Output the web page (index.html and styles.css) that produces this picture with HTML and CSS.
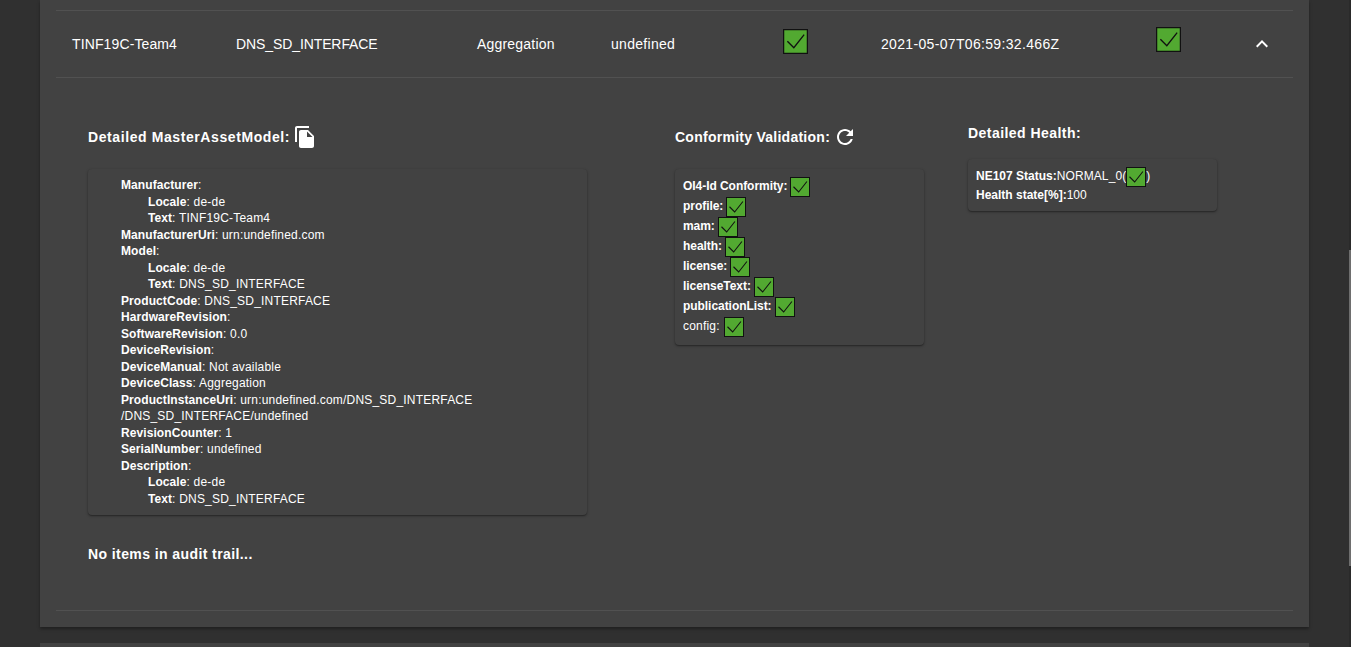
FILE: index.html
```html
<!DOCTYPE html>
<html lang="en">
<head>
	<meta charset="UTF-8">
	<title>Assets</title>
	<link rel="stylesheet" href="styles.css">
</head>
<body>
	<svg class="defs" width="0" height="0">
		<symbol id="check" viewBox="0 0 24 24">
			<rect x="0.6" y="0.6" width="22.800" height="22.800" fill="#52a931" stroke="#111" stroke-width="1.200"/>
			<path d="M4.200 11.700l6.200 6.300L20.300 5.400" fill="none" stroke="#111" stroke-width="1.300"/>
		</symbol>
	</svg>
	<div class="scroll-page">
		<div class="panel">
			<div class="row">
				<div class="cell c1">TINF19C-Team4</div>
				<div class="cell c2">DNS_SD_INTERFACE</div>
				<div class="cell c3">Aggregation</div>
				<div class="cell c4">undefined</div>
				<div class="cell c5"><svg class="check-lg"><use href="#check"/></svg></div>
				<div class="cell c6">2021-05-07T06:59:32.466Z</div>
				<div class="cell c7"><svg class="check-lg"><use href="#check"/></svg></div>
				<div class="cell c8">
					<svg class="chevron" viewBox="0 0 24 24"><path d="M12 8l-6 6 1.410 1.410L12 10.830l4.590 4.580L18 14z" fill="#fff"/></svg>
				</div>
			</div>
			<div class="details">
				<div class="columns">
					<div class="col-mam">
						<h3 class="head head-mam">Detailed MasterAssetModel:
							<svg class="copy" viewBox="0 0 24 24"><path d="M16 1H4c-1.100 0-2 .9-2 2v14h2V3h12V1zm-1 4l6 6v10c0 1.100-.9 2-2 2H7.990C6.890 23 6 22.100 6 21l.01-14c0-1.100.89-2 1.990-2h7zm-1 7h5.500L14 6.500V12z" fill="#fff"/></svg>
						</h3>
						<div class="card mam">
							<div class="l"><b>Manufacturer</b>:</div>
							<div class="l sub"><b>Locale</b>: de-de</div>
							<div class="l sub"><b>Text</b>: TINF19C-Team4</div>
							<div class="l"><b>ManufacturerUri</b>: urn:undefined.com</div>
							<div class="l"><b>Model</b>:</div>
							<div class="l sub"><b>Locale</b>: de-de</div>
							<div class="l sub"><b>Text</b>: DNS_SD_INTERFACE</div>
							<div class="l"><b>ProductCode</b>: DNS_SD_INTERFACE</div>
							<div class="l"><b>HardwareRevision</b>:</div>
							<div class="l"><b>SoftwareRevision</b>: 0.0</div>
							<div class="l"><b>DeviceRevision</b>:</div>
							<div class="l"><b>DeviceManual</b>: Not available</div>
							<div class="l"><b>DeviceClass</b>: Aggregation</div>
							<div class="l"><b>ProductInstanceUri</b>: urn:undefined.com/DNS_SD_INTERFACE<br>/DNS_SD_INTERFACE/undefined</div>
							<div class="l"><b>RevisionCounter</b>: 1</div>
							<div class="l"><b>SerialNumber</b>: undefined</div>
							<div class="l"><b>Description</b>:</div>
							<div class="l sub"><b>Locale</b>: de-de</div>
							<div class="l sub"><b>Text</b>: DNS_SD_INTERFACE</div>
						</div>
					</div>
					<div class="col-conf">
						<h3 class="head head-conf">Conformity Validation:
							<svg class="refresh" viewBox="0 0 24 24"><path d="M17.650 6.350C16.200 4.900 14.210 4 12 4c-4.420 0-7.990 3.580-7.990 8s3.570 8 7.990 8c3.730 0 6.840-2.550 7.730-6h-2.080c-.82 2.330-3.040 4-5.650 4-3.310 0-6-2.690-6-6s2.690-6 6-6c1.660 0 3.140.69 4.220 1.780L13 11h7V4l-2.350 2.350z" fill="#fff"/></svg>
						</h3>
						<div class="card conf">
							<div class="c-line"><b>OI4-Id Conformity:</b><svg class="check"><use href="#check"/></svg></div>
							<div class="c-line"><b>profile:</b><svg class="check"><use href="#check"/></svg></div>
							<div class="c-line"><b>mam:</b><svg class="check"><use href="#check"/></svg></div>
							<div class="c-line"><b>health:</b><svg class="check"><use href="#check"/></svg></div>
							<div class="c-line"><b>license:</b><svg class="check"><use href="#check"/></svg></div>
							<div class="c-line"><b>licenseText:</b><svg class="check"><use href="#check"/></svg></div>
							<div class="c-line"><b>publicationList:</b><svg class="check"><use href="#check"/></svg></div>
							<div class="c-line"><span class="plain">config:</span><svg class="check"><use href="#check"/></svg></div>
						</div>
					</div>
					<div class="col-health">
						<h3 class="head head-health">Detailed Health:</h3>
						<div class="card health">
							<div class="h-line"><b>NE107 Status:</b><span class="plain">NORMAL_0(</span><svg class="check"><use href="#check"/></svg>)</div>
							<div class="h-line"><b>Health state[%]:</b>100</div>
						</div>
					</div>
				</div>
				<h3 class="head audit">No items in audit trail...</h3>
			</div>
		</div>
		<div class="panel-next"></div>
	</div>
	<div class="scroll-track"><div class="scroll-thumb"></div></div>
</body>
</html>
```
FILE: styles.css
```css
html, body {
	margin: 0;
	height: 647px;
	overflow: hidden;
}
body {
	background: #303030;
	color: #fff;
	font-family: "Liberation Sans", Arial, sans-serif;
	font-size: 12px;
}
.defs {
	display: block;
	height: 0;
}
.scroll-page {
	padding: 0 42px 0 40px;
}
.panel {
	background: #424242;
	height: 627px;
	padding: 10px 16px 0;
	box-sizing: border-box;
	box-shadow: 0 2px 3px rgba(0,0,0,0.35);
}
.row {
	display: flex;
	height: 68px;
	align-items: center;
	border-top: 1px solid #515151;
	border-bottom: 1px solid #515151;
	box-sizing: border-box;
	font-size: 14px;
}
.cell {
	flex: none;
	padding-left: 16px;
	box-sizing: border-box;
}
.c1 { width: 164px; letter-spacing: 0.12px; }
.c2 { width: 241px; letter-spacing: -0.1px; }
.c3 { width: 134px; letter-spacing: 0.2px; }
.c4 { width: 156px; letter-spacing: 0.3px; }
.c5 { width: 120px; padding-left: 32px; }
.c6 { width: 269px; padding-left: 10px; letter-spacing: 0.33px; }
.c7 { width: 110px; }
.c8 { flex: 1; padding-left: 0; }
.check-lg {
	display: block;
	width: 25px;
	height: 25px;
}
.c5 .check-lg { margin-top: -5px; }
.c7 .check-lg { margin-top: -9px; }
.chevron {
	display: block;
	width: 24px;
	height: 24px;
}
.details {
	height: 533px;
	padding: 0 32px;
	border-bottom: 1px solid #515151;
	box-sizing: border-box;
}
.columns {
	display: flex;
}
.col-mam { width: 587px; }
.col-conf { width: 293px; }
.col-health { width: 250px; }
.head {
	margin: 0;
	font-size: 14px;
	font-weight: bold;
	display: flex;
	align-items: center;
}
.head-mam {
	margin-top: 46px;
	height: 26px;
	letter-spacing: 0.59px;
}
.head-conf {
	margin-top: 46px;
	height: 26px;
	letter-spacing: 0.26px;
}
.head-health {
	margin-top: 47px;
	height: 16px;
	letter-spacing: 0.45px;
}
.copy {
	width: 24px;
	height: 24px;
	margin-left: 3px;
}
.refresh {
	width: 24px;
	height: 24px;
	margin-left: 3px;
}
.card {
	background: #424242;
	border-radius: 4px;
	box-shadow: 0 1px 3px rgba(0,0,0,0.3), 0 1px 1px rgba(0,0,0,0.2);
	box-sizing: border-box;
}
.mam {
	width: 499px;
	height: 346px;
	margin-top: 19px;
	padding: 8.3px 8px 0 33px;
	line-height: 16.5px;
	letter-spacing: 0.2px;
}
.mam b {
	letter-spacing: 0.08px;
}
.sub {
	padding-left: 27px;
}
.conf {
	width: 249px;
	height: 176px;
	margin-top: 19px;
	padding: 8px;
}
.c-line {
	height: 20px;
	display: flex;
	line-height: 18px;
	gap: 3px;
}
.c-line b {
	letter-spacing: -0.05px;
}
.c-line .plain {
	letter-spacing: 0.2px;
	margin-right: 1px;
}
.check {
	display: block;
	width: 20px;
	height: 20px;
	flex: none;
}
.health {
	width: 249px;
	height: 52px;
	margin-top: 18px;
	padding: 8px;
}
.h-line {
	display: flex;
	height: 19px;
	line-height: 18px;
}
.h-line .plain {
	letter-spacing: 0.1px;
}
.audit {
	margin-top: 31px;
	letter-spacing: 0.41px;
}
.panel-next {
	height: 20px;
	margin-top: 16px;
	background: #424242;
}
.scroll-track {
	position: fixed;
	top: 0;
	right: 0;
	bottom: 0;
	width: 2px;
	background: #2a2a2a;
}
.scroll-thumb {
	margin-top: 250px;
	height: 316px;
	background: #6e6e6e;
}
```
